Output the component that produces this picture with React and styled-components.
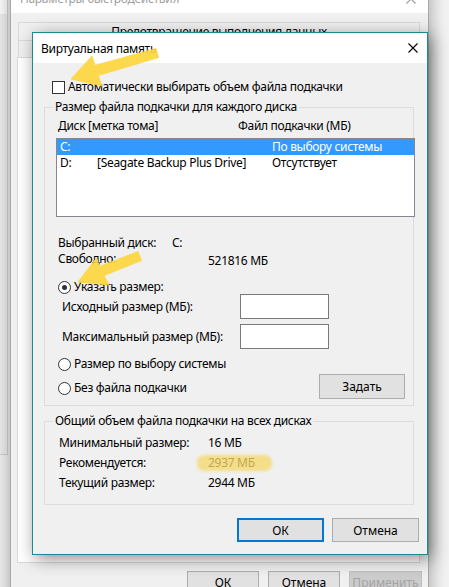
import React from "react"
import styled, { createGlobalStyle } from "styled-components"

const GlobalStyle = createGlobalStyle`
  html, body { margin: 0; padding: 0; }
  body {
    width: 449px;
    height: 587px;
    overflow: hidden;
    background: #ffffff;
    font-family: "Noto Sans", "Open Sans", sans-serif;
    font-size: 12px;
    letter-spacing: -0.3px;
    color: #000;
  }
  * { box-sizing: border-box; }
`

const Desktop = styled.div`
  position: relative;
  width: 449px;
  height: 587px;
  overflow: hidden;
  background: #f3f3f3;
`

/* window on the far left, mostly off screen */
const OtherWindow = styled.div`
  position: absolute;
  left: -300px;
  top: -17px;
  width: 308px;
  height: 472px;
  background: #f0f0f0;
  border: 1px solid #d4d4d4;
  display: flex;
  flex-direction: column;
`
const OtherTitle = styled.div`
  height: 30px;
  background: #fff;
`

const BackWindow = styled.div`
  position: absolute;
  left: 10px;
  top: -17px;
  width: 419px;
  height: 640px;
  background: #f0f0f0;
  border: 1px solid #a9a9a9;
  box-shadow: 0 0 18px rgba(0, 0, 0, 0.35);
  display: flex;
  flex-direction: column;
`
const BackTitle = styled.div`
  height: 29px;
  background: #fff;
  color: #a0a0a0;
  display: flex;
  align-items: center;
  justify-content: space-between;
  padding: 0 12px 0 9px;
  font-size: 12px;
`
const BackBody = styled.div`
  padding: 9px 8px 0 6px;
  display: flex;
  flex-direction: column;
`
const TabRow = styled.div`
  display: flex;
  margin-left: 2px;
  height: ${p => p.$h}px;
`
const Tab = styled.div`
  flex: ${p => p.$grow || 1};
  border: 1px solid #d9d9d9;
  border-bottom: none;
  margin-left: -1px;
  background: ${p => (p.$active ? "#fff" : "#f0f0f0")};
  display: flex;
  align-items: center;
  justify-content: center;
  white-space: nowrap;
  overflow: hidden;
  line-height: 14px;
`
const TabPanel = styled.div`
  height: 506px;
  background: #fff;
  border: 1px solid #d9d9d9;
`
const BackButtons = styled.div`
  display: flex;
  justify-content: flex-end;
  gap: 9px;
  margin: 8px -2px 0 0;
`
const Button = styled.button`
  width: ${p => p.$w || 72}px;
  height: ${p => p.$h || 23}px;
  padding: 0;
  font: inherit;
  color: ${p => (p.disabled ? "#a3a3a3" : "#000")};
  background: ${p => (p.disabled ? "#cccccc" : "#e1e1e1")};
  border: ${p => (p.$default ? "2px solid #0078d7" : p.disabled ? "1px solid #bfbfbf" : "1px solid #adadad")};
`

const Dialog = styled.div`
  position: absolute;
  left: 32px;
  top: 32px;
  width: 396px;
  height: 523px;
  background: #f0f0f0;
  border: 1px solid #1b8a90;
  box-shadow: 3px 4px 16px rgba(0, 0, 0, 0.45);
  display: flex;
  flex-direction: column;
`
const TitleBar = styled.div`
  height: 30px;
  flex: none;
  background: #fff;
  display: flex;
  align-items: center;
  justify-content: space-between;
  padding: 0 9px 0 8px;
`
const TitleText = styled.span`
  font-size: 12px;
`
const DialogBody = styled.div`
  display: flex;
  flex-direction: column;
  padding: 0 13px 0 11px;
`

const CheckRow = styled.label`
  display: flex;
  align-items: center;
  gap: 3px;
  height: 16px;
  margin: 16px 0 0 8px;
  line-height: 16px;
`
const CheckBox = styled.span`
  width: 13px;
  height: 13px;
  flex: none;
  background: #fff;
  border: 1px solid #333;
`

const Group = styled.fieldset`
  margin: ${p => p.$top}px 0 0 0;
  padding: 0 ${p => p.$pr || 0}px ${p => p.$pb}px 0;
  border: 1px solid #dcdcdc;
  min-width: 0;
`
const Legend = styled.legend`
  margin-left: 8px;
  padding: 0 2px;
  line-height: 16px;
  height: 16px;
`

const ListHeader = styled.div`
  display: grid;
  grid-template-columns: 180px 1fr;
  padding: 3px 0 0 13px;
  line-height: 16px;
`
const ListBox = styled.div`
  margin: 4px 0 0 11px;
  width: 359px;
  height: 79px;
  background: #fff;
  border: 1px solid #828790;
`
const ListRow = styled.div`
  display: grid;
  grid-template-columns: 37px 175px 1fr;
  padding-left: 3px;
  height: 16px;
  line-height: 16px;
  white-space: nowrap;
  background: ${p => (p.$selected ? "#3399ff" : "transparent")};
  color: ${p => (p.$selected ? "#fff" : "#000")};
`

const InfoRow = styled.div`
  display: grid;
  grid-template-columns: ${p => p.$col}px 1fr;
  padding-left: ${p => p.$pl}px;
  margin-top: ${p => p.$mt || 0}px;
  line-height: ${p => p.$lh || 16}px;
`
const Value = styled.span`
  padding-top: ${p => p.$pt || 0}px;
`

const RadioRow = styled.label`
  display: flex;
  align-items: center;
  gap: 3px;
  height: 16px;
  line-height: 16px;
  margin-top: ${p => p.$mt || 0}px;
  padding-left: 13px;
`
const Radio = styled.span`
  width: 13px;
  height: 13px;
  flex: none;
  border-radius: 50%;
  background: #fff;
  border: 1px solid #333;
  display: flex;
  align-items: center;
  justify-content: center;
  &::before {
    content: "";
    width: 5px;
    height: 5px;
    border-radius: 50%;
    background: ${p => (p.$checked ? "#333" : "transparent")};
  }
`

const SizeRow = styled.div`
  display: grid;
  grid-template-columns: 178px 89px;
  align-items: center;
  padding-left: 17px;
  margin-top: ${p => p.$mt}px;
  height: 25px;
`
const Input = styled.div`
  width: 89px;
  height: 25px;
  background: #fff;
  border: 1px solid #7a7a7a;
`

const BottomRow = styled.div`
  display: flex;
  justify-content: space-between;
  align-items: flex-start;
  margin-top: 2px;
  padding-right: 8px;
`

const Highlight = styled.span`
  position: relative;
  color: #3a3a3a;
  &::after {
    content: "";
    position: absolute;
    left: -11px;
    right: -17px;
    top: 1px;
    bottom: 0;
    border-radius: 7px;
    background: rgba(247, 214, 92, 0.7);
    filter: blur(1.5px);
  }
`

const DialogButtons = styled.div`
  display: flex;
  justify-content: flex-end;
  gap: 8px;
  margin: 13px -5px 0 0;
`

const Annotations = styled.svg`
  position: absolute;
  left: 0;
  top: 0;
  width: 449px;
  height: 587px;
  pointer-events: none;
`

const CloseIcon = ({ color = "#000" }) => (
  <svg width="10" height="10" viewBox="0 0 10 10">
    <path d="M0.5 0.5 L9.5 9.5 M9.5 0.5 L0.5 9.5" stroke={color} strokeWidth="1.1" fill="none" />
  </svg>
)

const App = () => {
  return (
    <Desktop>
      <GlobalStyle />
      <OtherWindow>
        <OtherTitle />
      </OtherWindow>

      <BackWindow>
        <BackTitle>
          <span>Параметры быстродействия</span>
          <CloseIcon color="#9a9a9a" />
        </BackTitle>
        <BackBody>
          <TabRow $h={18}>
            <Tab>Предотвращение выполнения данных</Tab>
          </TabRow>
          <TabRow $h={17}>
            <Tab>Визуальные эффекты</Tab>
            <Tab $active>Дополнительно</Tab>
          </TabRow>
          <TabPanel />
          <BackButtons>
            <Button>ОК</Button>
            <Button>Отмена</Button>
            <Button disabled $w={73}>Применить</Button>
          </BackButtons>
        </BackBody>
      </BackWindow>

      <Dialog>
        <TitleBar>
          <TitleText>Виртуальная память</TitleText>
          <CloseIcon />
        </TitleBar>
        <DialogBody>
          <CheckRow>
            <CheckBox />
            Автоматически выбирать объем файла подкачки
          </CheckRow>

          <Group $top={4} $pb={6}>
            <Legend>Размер файла подкачки для каждого диска</Legend>
            <ListHeader>
              <span>Диск [метка тома]</span>
              <span>Файл подкачки (МБ)</span>
            </ListHeader>
            <ListBox>
              <ListRow $selected>
                <span>C:</span>
                <span></span>
                <span>По выбору системы</span>
              </ListRow>
              <ListRow>
                <span>D:</span>
                <span>[Seagate Backup Plus Drive]</span>
                <span>Отсутствует</span>
              </ListRow>
            </ListBox>

            <InfoRow $col={114} $pl={13} $mt={18}>
              <span>Выбранный диск:</span>
              <span>C:</span>
            </InfoRow>
            <InfoRow $col={150} $pl={13}>
              <span>Свободно:</span>
              <Value $pt={2}>521816 МБ</Value>
            </InfoRow>

            <RadioRow $mt={10}>
              <Radio $checked />
              Указать размер:
            </RadioRow>
            <SizeRow $mt={-1}>
              <span>Исходный размер (МБ):</span>
              <Input />
            </SizeRow>
            <SizeRow $mt={5}>
              <span>Максимальный размер (МБ):</span>
              <Input />
            </SizeRow>
            <RadioRow $mt={7}>
              <Radio />
              Размер по выбору системы
            </RadioRow>
            <BottomRow>
              <RadioRow $mt={6}>
                <Radio />
                Без файла подкачки
              </RadioRow>
              <Button $w={86} $h={25}>Задать</Button>
            </BottomRow>
          </Group>

          <Group $top={7} $pb={11}>
            <Legend>Общий объем файла подкачки на всех дисках</Legend>
            <InfoRow $col={149} $pl={14} $mt={4} $lh={20}>
              <span>Минимальный размер:</span>
              <span>16 МБ</span>
            </InfoRow>
            <InfoRow $col={149} $pl={14} $lh={20}>
              <span>Рекомендуется:</span>
              <span><Highlight>2937 МБ</Highlight></span>
            </InfoRow>
            <InfoRow $col={149} $pl={14} $lh={20}>
              <span>Текущий размер:</span>
              <span>2944 МБ</span>
            </InfoRow>
          </Group>

          <DialogButtons>
            <Button $default $w={87} $h={24}>ОК</Button>
            <Button $w={87} $h={24}>Отмена</Button>
          </DialogButtons>
        </DialogBody>
      </Dialog>

      <Annotations viewBox="0 0 449 587">
        <g fill="#fdd63f" opacity="0.92" stroke="#fdd63f" strokeWidth="1" strokeLinejoin="round">
          <polygon points="71,79 92,56 95,65.5 156,48.5 158.5,57.5 98,75.5 102,86" />
          <polygon points="78,282 96.5,258 99.5,266.5 138,251.5 141.5,260.5 104,275.5 109,285" />
        </g>
      </Annotations>
    </Desktop>
  )
}

export default App
